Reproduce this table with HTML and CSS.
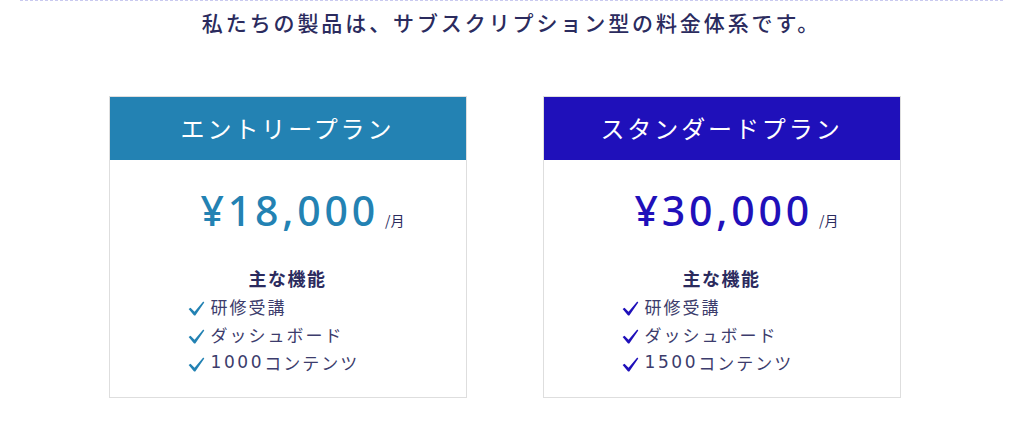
FILE: index.html
```html
<!DOCTYPE html>
<html lang="ja">
<head>
<meta charset="utf-8">
<link rel="stylesheet" href="styles.css">
</head>
<body>
<div class="page">
  <p class="lead">私たちの製品は、サブスクリプション型の料金体系です。</p>
  <div class="plans">
    <section class="plan plan-entry">
      <h2 class="plan-title">エントリープラン</h2>
      <div class="plan-body">
        <div class="price"><span class="amount">¥18,000</span><span class="unit">/月</span></div>
        <h3 class="features-title">主な機能</h3>
        <ul class="features">
          <li><svg class="check" viewBox="0 0 18 16"><path d="M0.6 8.6 L2.6 7.2 L6.9 11.4 L16.2 0.6 L17.3 1.5 L7.7 15.4 L6.4 15.4 Z" fill="currentColor"/></svg>研修受講</li>
          <li><svg class="check" viewBox="0 0 18 16"><path d="M0.6 8.6 L2.6 7.2 L6.9 11.4 L16.2 0.6 L17.3 1.5 L7.7 15.4 L6.4 15.4 Z" fill="currentColor"/></svg>ダッシュボード</li>
          <li><svg class="check" viewBox="0 0 18 16"><path d="M0.6 8.6 L2.6 7.2 L6.9 11.4 L16.2 0.6 L17.3 1.5 L7.7 15.4 L6.4 15.4 Z" fill="currentColor"/></svg><span class="num">1000</span>コンテンツ</li>
        </ul>
      </div>
    </section>
    <section class="plan plan-standard">
      <h2 class="plan-title">スタンダードプラン</h2>
      <div class="plan-body">
        <div class="price"><span class="amount">¥30,000</span><span class="unit">/月</span></div>
        <h3 class="features-title">主な機能</h3>
        <ul class="features">
          <li><svg class="check" viewBox="0 0 18 16"><path d="M0.6 8.6 L2.6 7.2 L6.9 11.4 L16.2 0.6 L17.3 1.5 L7.7 15.4 L6.4 15.4 Z" fill="currentColor"/></svg>研修受講</li>
          <li><svg class="check" viewBox="0 0 18 16"><path d="M0.6 8.6 L2.6 7.2 L6.9 11.4 L16.2 0.6 L17.3 1.5 L7.7 15.4 L6.4 15.4 Z" fill="currentColor"/></svg>ダッシュボード</li>
          <li><svg class="check" viewBox="0 0 18 16"><path d="M0.6 8.6 L2.6 7.2 L6.9 11.4 L16.2 0.6 L17.3 1.5 L7.7 15.4 L6.4 15.4 Z" fill="currentColor"/></svg><span class="num">1500</span>コンテンツ</li>
        </ul>
      </div>
    </section>
  </div>
</div>
</body>
</html>
```
FILE: styles.css
```css
* { box-sizing: border-box; }
html, body { margin: 0; padding: 0; background: #fff; }
body {
  font-family: "Noto Sans CJK JP", "Noto Sans", sans-serif;
  color: #2b2b5e;
}
.page {
  margin: 0 21px 0 20px;
  border-top: 1px dashed #c9c9ef;
  padding-top: 6px;
}
.lead {
  margin: 0;
  text-align: center;
  font-size: 21px;
  line-height: 30px;
  letter-spacing: 2.9px;
  font-weight: 500;
  color: #2b2b5e;
}
.plans {
  display: flex;
  justify-content: center;
  gap: 76px;
  margin-top: 59px;
  padding-right: 14px;
}
.plan {
  width: 358px;
  height: 302px;
  border: 1px solid #dedede;
  background: #fff;
}
.plan-title {
  margin: 0;
  height: 63px;
  display: flex;
  align-items: center;
  justify-content: center;
  color: #fff;
  font-size: 24px;
  font-weight: 400;
  letter-spacing: 2.9px;
  padding-bottom: 2px;
}
.plan-entry .plan-title { background: #2382b3; }
.plan-standard .plan-title { background: #1f10ba; }
.plan-body {
  padding-top: 28px;
}
.price {
  display: flex;
  justify-content: center;
  align-items: baseline;
  padding-left: 30px;
}
.amount {
  font-family: "Noto Sans", sans-serif;
  font-size: 41px;
  line-height: 44px;
  font-weight: 500;
  letter-spacing: 3.8px;
}
.plan-entry .amount { color: #2382b3; }
.plan-standard .amount { color: #1f10ba; }
.unit {
  margin-left: 6px;
  font-size: 14px;
  color: #2b2b5e;
}
.features-title {
  margin: 34px 0 0;
  text-align: center;
  font-size: 18px;
  line-height: 24px;
  font-weight: 700;
  letter-spacing: 1.5px;
  color: #2b2b5e;
}
.features {
  list-style: none;
  margin: 0;
  padding: 2px 0 0 78px;
}
.features li {
  display: flex;
  align-items: center;
  height: 28px;
  font-size: 17px;
  letter-spacing: 2px;
  color: #3c3c6c;
}
.num {
  font-family: "DejaVu Sans", sans-serif;
  font-weight: 400;
  font-size: 17px;
  letter-spacing: 2.6px;
}
.check {
  width: 17px;
  height: 15px;
  margin-right: 6px;
  margin-top: 5px;
  flex: none;
}
.plan-entry .check { color: #2382b3; }
.plan-standard .check { color: #1f10ba; }
```
